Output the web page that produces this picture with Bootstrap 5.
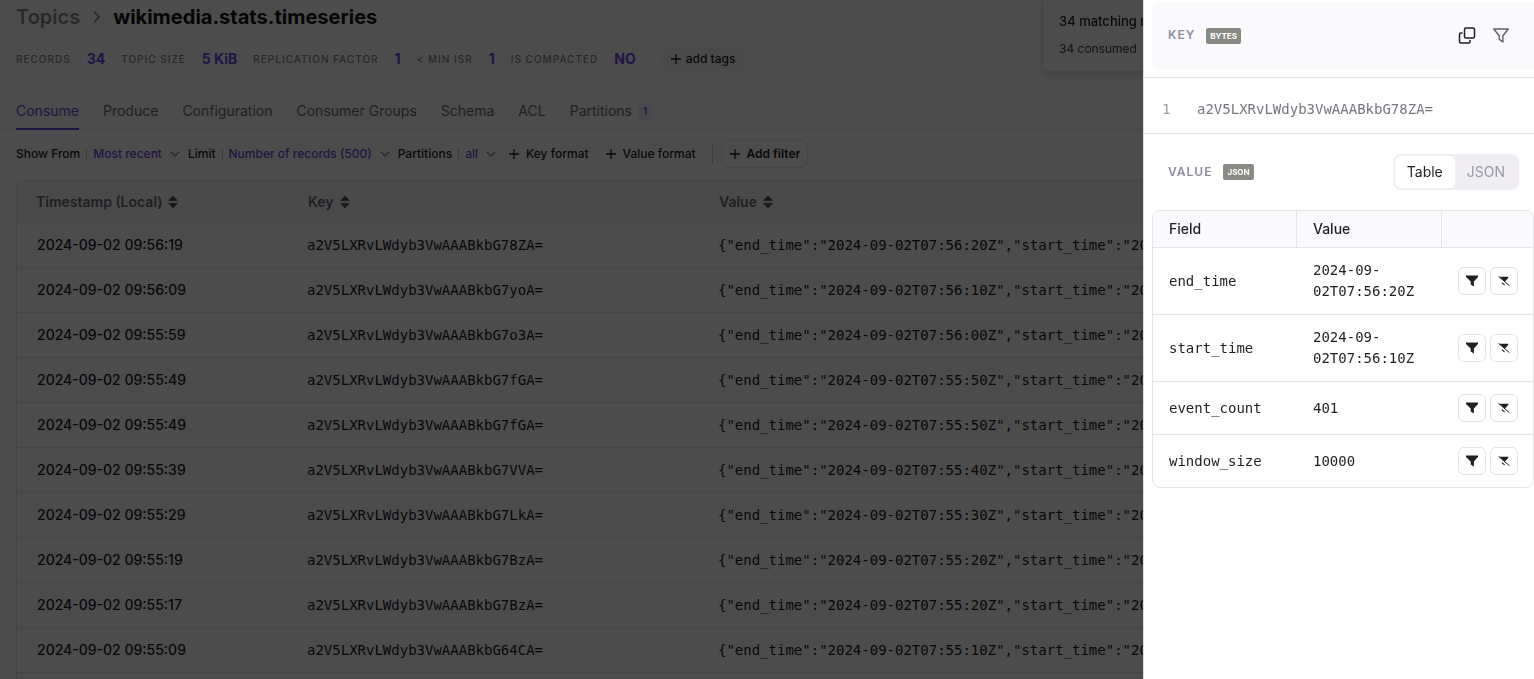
<!DOCTYPE html>
<html lang="en">
<head>
<meta charset="utf-8">
<meta name="viewport" content="width=device-width, initial-scale=1">
<title>wikimedia.stats.timeseries</title>
<link href="https://cdn.jsdelivr.net/npm/bootstrap@5.3.0/dist/css/bootstrap.min.css" rel="stylesheet">
<style>
  :root { --violet: #6b45e8; --line: #e4e4e9; --ink: #1f1f24; }
  body { font-family: Inter, "Liberation Sans", sans-serif; font-size: 14px; line-height: 20px; color: var(--ink); overflow: hidden; }
  a { color: inherit; text-decoration: none; }
  svg { flex: none; display: block; }
  table { border-collapse: separate; border-spacing: 0; }
  .mono { font-family: "DejaVu Sans Mono", "Liberation Mono", monospace; font-size: 14px; }
  .crumbs { font-size: 20px; line-height: 24px; padding-top: 5px; font-weight: 700; }
  .crumbs a { color: #8b8a96; font-weight: 600; }
  .crumbs h1 { font: inherit; margin: 0; color: #111116; }
  .crumbs svg { margin: 0 12px; }
  .facts { margin-top: 16px; height: 28px; gap: 16px; }
  .facts dt { font-size: 10px; font-weight: 500; letter-spacing: 1px; color: #85848f; }
  .facts dd { font-size: 14px; font-weight: 700; color: var(--violet); margin: 0; }
  .facts .tagbtn { background: #f8f8fa; font-size: 12px; font-weight: 500; border-radius: 6px; padding: 4px 8px; margin-left: 10px; color: var(--ink); }
  .topic-tabs { margin-top: 21px; gap: 24px; border-bottom: 1px solid var(--line); padding-left: 16px; }
  .topic-tabs .nav-link { padding: 7px 0 7px; color: #6a6974; border-bottom: 2px solid transparent; margin-bottom: -1px; border-radius: 0; }
  .topic-tabs .nav-link.active { color: var(--violet); border-color: var(--violet); }
  .count { font-size: 10px; line-height: 17px; font-weight: 600; color: var(--violet); background: #f1edff; border-radius: 4px; padding: 0 5px; margin-left: 6px; }
  .tools { margin-top: 10px; height: 28px; font-size: 12px; font-weight: 500; padding-left: 16px; }
  .tools .btn { font-size: 12px; line-height: 18px; font-weight: 500; padding: 0; color: var(--ink); gap: 6px; border: 0; }
  .tools .pick { color: var(--violet); border-left: 1px solid #c8c8d0; padding-left: 6px; line-height: 12px; margin-left: 6px; border-radius: 0; gap: 8px; }
  .tools .addf { border: 1px solid var(--line); border-radius: 6px; padding: 4px 7px; font-weight: 600; }
  .log { margin: 12px 16px 0; border: 1px solid var(--line); border-bottom: 0; border-radius: 6px 6px 0 0; overflow: hidden; }
  .log table { table-layout: fixed; width: 100%; }
  .log th { height: 42px; background: #f9f9fb; color: #6a6974; font-weight: 600; padding: 0 19px; }
  .log th span { gap: 6px; }
  .log td { height: 45px; border-bottom: 1px solid var(--line); padding: 0 20px; white-space: nowrap; overflow: hidden; font-weight: 500; color: #19191e; }
  .log td.mono { padding: 0 18px; font-weight: 400; }
  .notice { position: fixed; top: -12px; right: 16px; width: 476px; height: 84px; padding: 22px 16px 0; background: #fff; border: 1px solid var(--line); border-radius: 6px; box-shadow: 0 4px 8px rgba(0,0,0,.12); }
  .notice-title { font-size: 13px; font-weight: 500; }
  .notice-text { font-size: 12px; margin-top: 8px; color: #44434b; }
  .offcanvas-backdrop.show { opacity: .7; }
  .offcanvas.drawer { --bs-offcanvas-width: 391px; border-left: 1px solid #dcdce2; color: var(--ink); overflow: hidden; outline: 0; transition: none; }
  .keyhead { background: #fafafc; height: 67px; margin: 2px 0 8px 8px; padding: 0 24px 0 16px; border-radius: 6px 0 0 6px; }
  .cap { font-size: 12px; font-weight: 600; letter-spacing: 1px; color: #8f8c9e; margin: 0; }
  .kind { font-size: 8px; line-height: 16px; font-weight: 700; background: #8b8b85; color: #fff; padding: 0 4px; border-radius: 2px; margin-left: 11px; }
  .iconbtn { padding: 0; border: 0; }
  .keycode { border-top: 1px solid var(--line); border-bottom: 1px solid var(--line); height: 57px; padding: 6px 18px 0; color: #77767e; }
  .keycode .ln { color: #9997a3; width: 35px; }
  .valhead { height: 76px; padding: 0 15px 0 24px; }
  .switcher { background: #f0eef2; border-radius: 8px; padding: 2px; }
  .switcher .btn { font-size: 14px; line-height: 20px; padding: 6px 12px; border: 0; border-radius: 6px; color: #9a97a6; }
  .switcher .btn-check:checked + .btn { background: #fff; color: var(--ink); }
  .fields { margin-left: 8px; border: 1px solid var(--line); border-radius: 8px; overflow: hidden; }
  .fields table { width: 100%; table-layout: fixed; }
  .fields th { font-weight: 500; background: #fafafc; height: 36px; padding: 0 16px; border-right: 1px solid var(--line); }
  .fields th:last-child { border-right: 0; }
  .fields td { border-top: 1px solid var(--line); padding: 12px 16px; line-height: 21px; }
  .fields td:last-child { padding-right: 0; }
  .sqbtn { width: 28px; height: 28px; padding: 0; border: 1px solid var(--line); border-radius: 6px; }
</style>
</head>
<body>
<svg width="0" height="0" class="position-absolute" aria-hidden="true">
  <symbol id="plus" viewBox="0 0 12 12"><path d="M6 1v10M1 6h10" fill="none" stroke="currentColor" stroke-width="1.3"/></symbol>
  <symbol id="down" viewBox="0 0 10 6"><path d="M1 1l4 4 4-4" fill="none" stroke="#77767f" stroke-width="1.1"/></symbol>
  <symbol id="sort" viewBox="0 0 10 14"><path d="M5 1l4.3 4.6H.7zM5 13l4.3-4.6H.7z" fill="#55545d" stroke="#55545d" stroke-width=".8" stroke-linejoin="round"/></symbol>
  <symbol id="funnel" viewBox="0 0 14 14"><path d="M1 1.5h12v1.4L8.9 7.6v4.9L5.7 10.6v-3L1 2.9z" fill="#1f1f24"/></symbol>
  <symbol id="funnel-off" viewBox="0 0 14 14"><path d="M2.4 2.800h8.900v.9L8.300 7.300 6.500 6.500 2.800 3.200zM4.900 8l2.800 2.300v1.200L4.900 9.600z" fill="#1f1f24"/><path d="M1.500 2.300l10.900 9.400" stroke="#1f1f24" stroke-width="1"/></symbol>
</svg>

<main class="min-vh-100 d-flex flex-column">
  <header class="px-3">
    <nav class="crumbs d-flex align-items-center" aria-label="Breadcrumb">
      <a href="#">Topics</a>
      <svg width="9" height="14" viewBox="0 0 9 14"><path d="M2 1.500L7 7l-5 5.500" fill="none" stroke="#77767f" stroke-width="1.4"/></svg>
      <h1>wikimedia.stats.timeseries</h1>
    </nav>
    <dl class="facts d-flex align-items-center mb-0">
      <dt>RECORDS</dt><dd>34</dd>
      <dt>TOPIC SIZE</dt><dd>5 KiB</dd>
      <dt>REPLICATION FACTOR</dt><dd>1</dd>
      <dt>&lt; MIN ISR</dt><dd>1</dd>
      <dt>IS COMPACTED</dt><dd>NO</dd>
      <dd><button class="btn tagbtn border-0 d-flex align-items-center gap-1"><svg width="12" height="12"><use href="#plus"/></svg>add tags</button></dd>
    </dl>
  </header>

  <ul class="nav topic-tabs">
    <li><a class="nav-link active" href="#">Consume</a></li>
    <li><a class="nav-link" href="#">Produce</a></li>
    <li><a class="nav-link" href="#">Configuration</a></li>
    <li><a class="nav-link" href="#">Consumer Groups</a></li>
    <li><a class="nav-link" href="#">Schema</a></li>
    <li><a class="nav-link" href="#">ACL</a></li>
    <li><a class="nav-link d-flex align-items-center" href="#">Partitions<span class="count">1</span></a></li>
  </ul>

  <div class="tools d-flex align-items-center">
    <span>Show From</span><button class="btn pick d-flex align-items-center">Most recent<svg width="10" height="6"><use href="#down"/></svg></button>
    <span class="ms-2">Limit</span><button class="btn pick d-flex align-items-center">Number of records (500)<svg width="10" height="6"><use href="#down"/></svg></button>
    <span class="ms-2">Partitions</span><button class="btn pick d-flex align-items-center">all<svg width="10" height="6"><use href="#down"/></svg></button>
    <button class="btn d-flex align-items-center ms-2 ps-1"><svg width="12" height="12"><use href="#plus"/></svg>Key format</button>
    <button class="btn d-flex align-items-center ms-3"><svg width="12" height="12"><use href="#plus"/></svg>Value format</button>
    <div class="vr ms-3 me-2 my-1"></div>
    <button class="btn addf d-flex align-items-center"><svg width="12" height="12"><use href="#plus"/></svg>Add filter</button>
  </div>

  <div class="log flex-grow-1">
    <table>
      <colgroup><col style="width:272px"><col style="width:411px"><col></colgroup>
      <thead><tr>
        <th><span class="d-flex align-items-center">Timestamp (Local)<svg width="10" height="14"><use href="#sort"/></svg></span></th>
        <th><span class="d-flex align-items-center">Key<svg width="10" height="14"><use href="#sort"/></svg></span></th>
        <th><span class="d-flex align-items-center">Value<svg width="10" height="14"><use href="#sort"/></svg></span></th>
      </tr></thead>
      <tbody id="records"></tbody>
    </table>
  </div>
</main>

<div class="notice" role="status">
  <div class="notice-title">34 matching records</div>
  <div class="notice-text">34 consumed</div>
</div>

<div class="offcanvas-backdrop fade show"></div>
<aside class="offcanvas offcanvas-end show drawer" data-bs-backdrop="false" data-bs-scroll="true" tabindex="-1" aria-label="Record details">
  <div class="keyhead d-flex align-items-center">
    <h2 class="cap">KEY</h2><span class="kind">BYTES</span>
    <button class="btn iconbtn ms-auto" aria-label="Copy key"><svg width="18" height="18" viewBox="0 0 18 18" fill="none" stroke="#1f1f24" stroke-width="1.5"><rect x="6.500" y="1" width="10" height="10" rx="1.500"/><path d="M4.500 6H3Q1.500 6 1.500 7.500v7Q1.500 16 3 16h7.500Q12 16 12 14.500v-1.500"/></svg></button>
    <button class="btn iconbtn ms-3" aria-label="Filter by key"><svg width="18" height="18" viewBox="0 0 18 18" fill="none" stroke="#5f5e68" stroke-width="1.400" stroke-linejoin="round"><path d="M1.700 2h14.600L10.900 8.800v6.200L7.300 12.400V8.800z"/></svg></button>
  </div>
  <div class="keycode mono d-flex align-items-center"><span class="ln">1</span><span>a2V5LXRvLWdyb3VwAAABkbG78ZA=</span></div>
  <div class="valhead d-flex align-items-center">
    <h2 class="cap">VALUE</h2><span class="kind">JSON</span>
    <div class="switcher d-flex ms-auto">
      <input class="btn-check" type="radio" name="view" id="view-table" checked><label class="btn" for="view-table">Table</label>
      <input class="btn-check" type="radio" name="view" id="view-json"><label class="btn" for="view-json">JSON</label>
    </div>
  </div>
  <div class="fields">
    <table>
      <colgroup><col style="width:144px"><col style="width:145px"><col></colgroup>
      <thead><tr><th>Field</th><th>Value</th><th aria-label="Actions"></th></tr></thead>
      <tbody id="fields" class="mono"></tbody>
    </table>
  </div>
</aside>

<script src="https://cdn.jsdelivr.net/npm/bootstrap@5.3.0/dist/js/bootstrap.bundle.min.js"></script>
<script>
  const records = [
    ['09:56:19', '78ZA', '07:56:20'], ['09:56:09', '7yoA', '07:56:10'],
    ['09:55:59', '7o3A', '07:56:00'], ['09:55:49', '7fGA', '07:55:50'],
    ['09:55:49', '7fGA', '07:55:50'], ['09:55:39', '7VVA', '07:55:40'],
    ['09:55:29', '7LkA', '07:55:30'], ['09:55:19', '7BzA', '07:55:20'],
    ['09:55:17', '7BzA', '07:55:20'], ['09:55:09', '64CA', '07:55:10']
  ];
  document.getElementById('records').innerHTML = records.map(([time, key, end]) =>
    `<tr><td>2024-09-02 ${time}</td><td class="mono">a2V5LXRvLWdyb3VwAAABkbG${key}=</td>` +
    `<td class="mono">{"end_time":"2024-09-02T${end}Z","start_time":"20</td></tr>`).join('');

  const fields = [
    ['end_time', '2024-09-02T07:56:20Z'], ['start_time', '2024-09-02T07:56:10Z'],
    ['event_count', '401'], ['window_size', '10000']
  ];
  const action = (icon, label) =>
    `<button class="btn sqbtn d-flex align-items-center justify-content-center" aria-label="${label}"><svg width="14" height="14"><use href="#${icon}"/></svg></button>`;
  document.getElementById('fields').innerHTML = fields.map(([name, value]) =>
    `<tr><td>${name}</td><td>${value}</td><td><div class="d-flex gap-1">` +
    action('funnel', 'Include ' + name) + action('funnel-off', 'Exclude ' + name) + '</div></td></tr>').join('');
</script>
</body>
</html>
